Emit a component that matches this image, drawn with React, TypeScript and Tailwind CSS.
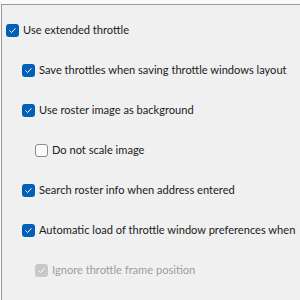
import React from 'react';

type Row = { label: string; indent: number; state: 'on' | 'off' | 'disabled' };

const rows: Row[] = [
  { label: 'Use extended throttle', indent: 0, state: 'on' },
  { label: 'Save throttles when saving throttle windows layout', indent: 1, state: 'on' },
  { label: 'Use roster image as background', indent: 1, state: 'on' },
  { label: 'Do not scale image', indent: 2, state: 'off' },
  { label: 'Search roster info when address entered', indent: 1, state: 'on' },
  { label: 'Automatic load of throttle window preferences when', indent: 1, state: 'on' },
  { label: 'Ignore throttle frame position', indent: 2, state: 'disabled' },
];

const Box = ({ state }: { state: Row['state'] }) => {
  if (state === 'off') {
    return <span className="w-[13px] h-[13px] shrink-0 rounded-[3px] border border-[#8b8b8b] bg-[#fbfbfb]" />;
  }
  const bg = state === 'on' ? 'bg-[#005fb8]' : 'bg-[#c8c8c8]';
  return (
    <span className={`w-[13px] h-[13px] shrink-0 rounded-[3px] ${bg} flex items-center justify-center`}>
      <svg width="9" height="9" viewBox="0 0 9 9" fill="none">
        <path d="M1.8 4.8 L3.6 6.5 L7.2 2.6" stroke="white" strokeWidth="1" strokeLinecap="round" strokeLinejoin="round" />
      </svg>
    </span>
  );
};

const indentClass = ['ml-[4px]', 'ml-[20px]', 'ml-[33px]'];

export default function App() {
  return (
    <div className="w-[300px] h-[300px] overflow-hidden bg-[#f9f9f9] pt-[4px] font-['Lato',sans-serif]">
      <div className="ml-[1px] h-full border-t border-l border-[#9a9a9a] bg-[#f0f0f0] pt-[5px] flex flex-col">
        {rows.map((r) => (
          <div key={r.label} className={`h-[40px] flex items-center gap-[4px] ${indentClass[r.indent]}`}>
            <Box state={r.state} />
            <span
              className={`text-[11.1px] whitespace-nowrap ${r.state === 'disabled' ? 'text-[#9d9d9d]' : 'text-[#1b1b1b]'}`}
            >
              {r.label}
            </span>
          </div>
        ))}
      </div>
    </div>
  );
}
